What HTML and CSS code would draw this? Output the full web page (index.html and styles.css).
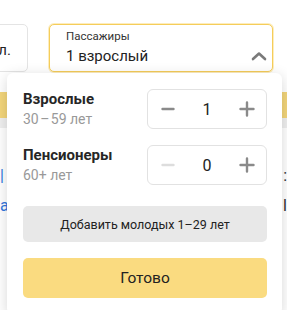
FILE: index.html
```html
<!DOCTYPE html>
<html lang="ru">
<head>
    <meta charset="UTF-8">
    <title>Пассажиры</title>
    <link rel="stylesheet" href="styles.css">
</head>
<body>

<div class="page">
    <div class="fields">
        <div class="field field-side">
            <span class="field-value">л.</span>
        </div>
        <div class="field field-pass">
            <div class="field-text">
                <div class="field-label">Пассажиры</div>
                <div class="field-value">1 взрослый</div>
            </div>
            <svg class="chevron" width="16" height="10" viewBox="0 0 16 10">
                <path d="M2 8 L8 2.5 L14 8" fill="none" stroke="#7a7a7a" stroke-width="2.6" stroke-linecap="round" stroke-linejoin="round"/>
            </svg>
        </div>
    </div>
    <div class="band-yellow"></div>
    <div class="band-gray"></div>
    <div class="under">
        <div class="under-line"><span class="blue">|</span><span class="dark">:</span></div>
        <div class="under-line"><span class="blue">a</span><span class="dark">l</span></div>
    </div>

    <!-- выпадающее окно -->
    <div class="popup">
        <div class="row">
            <div class="who">
                <div class="who-title">Взрослые</div>
                <div class="who-age">30&#8202;–&#8202;59 лет</div>
            </div>
            <div class="stepper">
                <button class="step">
                    <svg width="14" height="14" viewBox="0 0 14 14"><path d="M1.5 7 H12.5" stroke="#8a8a8a" stroke-width="2.4" stroke-linecap="round"/></svg>
                </button>
                <span class="count">1</span>
                <button class="step">
                    <svg width="16" height="16" viewBox="0 0 16 16"><path d="M1.5 8 H14.5 M8 1.5 V14.5" stroke="#8a8a8a" stroke-width="2.4" stroke-linecap="round"/></svg>
                </button>
            </div>
        </div>
        <div class="row">
            <div class="who">
                <div class="who-title">Пенсионеры</div>
                <div class="who-age">60+ лет</div>
            </div>
            <div class="stepper">
                <button class="step">
                    <svg width="14" height="14" viewBox="0 0 14 14"><path d="M1.5 7 H12.5" stroke="#dddddd" stroke-width="2.4" stroke-linecap="round"/></svg>
                </button>
                <span class="count">0</span>
                <button class="step">
                    <svg width="16" height="16" viewBox="0 0 16 16"><path d="M1.5 8 H14.5 M8 1.5 V14.5" stroke="#8a8a8a" stroke-width="2.4" stroke-linecap="round"/></svg>
                </button>
            </div>
        </div>
        <button class="btn btn-add">Добавить молодых 1–29 лет</button>
        <button class="btn btn-done">Готово</button>
    </div>
</div>

</body>
</html>
```

FILE: styles.css
```css
* {
    margin: 0;
    padding: 0;
    box-sizing: border-box;
}

html, body {
    width: 100%;
    height: 100%;
    overflow: hidden;
}

body {
    background: #fff;
    font-family: Roboto, "Liberation Sans", Arial, sans-serif;
    color: #222;
}

.page {
    position: relative;
    height: 100%;
}

.fields {
    display: flex;
    gap: 21px;
    padding-top: 24px;
    margin-left: -40px;
}

.field {
    height: 48px;
    border: 1px solid #e4e4e4;
    border-radius: 5px;
    background: #fff;
}

.field-side {
    width: 68px;
    display: flex;
    align-items: flex-end;
    justify-content: flex-end;
    padding: 0 16px 11px 0;
}

.field-pass {
    width: 224px;
    border: 1px solid #f5cd5a;
    box-shadow: 0 0 0 1px rgba(250, 214, 110, 0.45);
    display: flex;
    align-items: center;
    justify-content: space-between;
    padding: 0 5px 0 16px;
}

.field-label {
    font-size: 11.5px;
    line-height: 14px;
    color: #333;
    margin-top: -1px;
}

.field-value {
    font-size: 15px;
    line-height: 20px;
    color: #222;
    margin-top: 3px;
}

.chevron {
    margin-top: 16px;
}

.band-yellow {
    margin-top: 20px;
    height: 26px;
    background: #f3d57a;
}

.band-gray {
    height: 10px;
    background: #efefef;
}

.under {
    display: flex;
    flex-direction: column;
    gap: 14px;
    padding-top: 40px;
}

.under-line {
    display: flex;
    justify-content: space-between;
    font-size: 16px;
    line-height: 16px;
}

.blue {
    color: #3377dd;
}

.dark {
    color: #333;
}

/* выпадающее окно */
.popup {
    position: absolute;
    top: 73px;
    left: 7px;
    width: 275px;
    background: #fff;
    border-radius: 6px;
    box-shadow: 0 3px 14px rgba(0, 0, 0, 0.16);
    padding: 16px 15px 16px 16px;
    display: flex;
    flex-direction: column;
}

.row {
    display: flex;
    justify-content: space-between;
    align-items: center;
    height: 40px;
    margin-bottom: 16px;
}

.row + .row {
    margin-bottom: 21px;
}

.who-title {
    font-size: 15px;
    font-weight: bold;
    line-height: 19px;
    color: #262626;
}

.who-age {
    font-size: 14px;
    line-height: 18px;
    color: #999;
    margin-top: 1px;
}

.stepper {
    width: 120px;
    height: 40px;
    border: 1px solid #e2e2e2;
    border-radius: 6px;
    display: flex;
    align-items: center;
}

.step {
    width: 39px;
    height: 38px;
    border: none;
    background: none;
    display: flex;
    align-items: center;
    justify-content: center;
}

.count {
    flex-grow: 1;
    text-align: center;
    font-size: 16px;
    color: #222;
}

.btn {
    width: 100%;
    border: none;
    border-radius: 5px;
    font-family: Roboto, "Liberation Sans", Arial, sans-serif;
    color: #222;
}

.btn-add {
    height: 36px;
    background: #e8e8e8;
    font-size: 12.5px;
    margin-bottom: 16px;
}

.btn-done {
    height: 40px;
    background: #fadb80;
    font-size: 15.5px;
}
```
